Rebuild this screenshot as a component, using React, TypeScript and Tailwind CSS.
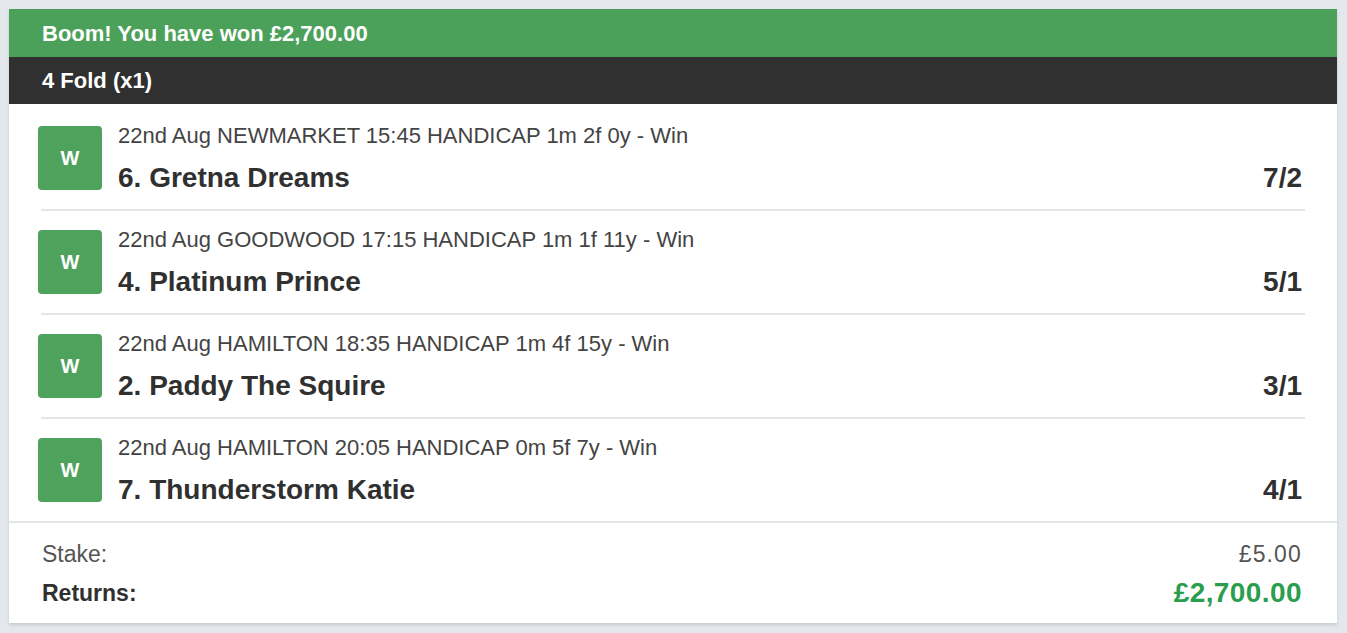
const legs = [
  { meta: "22nd Aug NEWMARKET 15:45 HANDICAP 1m 2f 0y - Win", name: "6. Gretna Dreams", odds: "7/2" },
  { meta: "22nd Aug GOODWOOD 17:15 HANDICAP 1m 1f 11y - Win", name: "4. Platinum Prince", odds: "5/1" },
  { meta: "22nd Aug HAMILTON 18:35 HANDICAP 1m 4f 15y - Win", name: "2. Paddy The Squire", odds: "3/1" },
  { meta: "22nd Aug HAMILTON 20:05 HANDICAP 0m 5f 7y - Win", name: "7. Thunderstorm Katie", odds: "4/1" },
];

function Leg({ meta, name, odds, last, first }: { meta: string; name: string; odds: string; last: boolean; first: boolean }) {
  return (
    <div className="px-[29px]">
      <div className={first ? "flex pt-[22px] pb-[19px]" : "flex pt-[19px] pb-[19px]"}>
        <div className="flex h-16 w-16 shrink-0 items-center justify-center rounded-[4px] bg-[#4ea25c] text-[20px] font-bold text-white">
          W
        </div>
        <div className="ml-4 flex h-16 flex-1 flex-col">
          <div className="text-[22px] leading-[20px] text-[#444]">{meta}</div>
          <div className="mt-4 flex h-8 items-center justify-between pr-[6px]">
            <span className="text-[28px] font-bold leading-[32px] text-[#303030]">{name}</span>
            <span className="text-[28px] font-bold leading-[32px] text-[#303030]">{odds}</span>
          </div>
        </div>
      </div>
      {!last && <div className="mx-[3px] h-[2px] bg-[#e3e7eb]" />}
    </div>
  );
}

export default function App() {
  return (
    <div className="min-h-[633px] bg-[#e4e7eb] pt-[9px] pb-[10px] font-['Liberation_Sans',Arial,sans-serif]">
      <div className="ml-[9px] mr-[10px] bg-white shadow-[0_2px_3px_rgba(0,0,0,0.12)]">
        <div className="flex h-12 items-center bg-[#4ca15a] pl-[33px] text-[22px] font-bold text-white">
          Boom! You have won £2,700.00
        </div>
        <div className="flex h-[47px] items-center bg-[#303030] pl-[33px] text-[22px] font-bold text-white">
          4 Fold (x1)
        </div>
        <div>
          {legs.map((l, i) => (
            <Leg key={l.name} {...l} first={i === 0} last={i === legs.length - 1} />
          ))}
        </div>
        <div className="border-t-2 border-[#e3e7eb] pt-[17px] pb-[16px] pl-[33px] pr-[35px]">
          <div className="flex items-center justify-between text-[23px] leading-[28px] text-[#555]">
            <span>Stake:</span>
            <span className="tracking-[0.05em]">£5.00</span>
          </div>
          <div className="mt-[11px] flex items-center justify-between">
            <span className="text-[23px] font-bold leading-[28px] text-[#303030]">Returns:</span>
            <span className="text-[28px] font-bold leading-[28px] tracking-[0.015em] text-[#2a9d4f]">£2,700.00</span>
          </div>
        </div>
      </div>
    </div>
  );
}
